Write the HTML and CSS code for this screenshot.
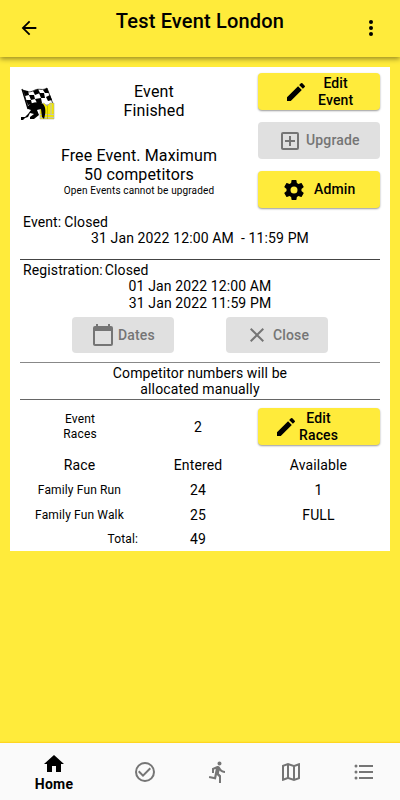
FILE: index.html
```
<!DOCTYPE html>
<html lang="en">
<head>
<title>Test Event London</title>
<meta charset="utf-8">
<meta name="viewport" content="width=device-width, initial-scale=1">
<link rel="stylesheet" href="styles.css">
</head>
<body>

<header class="appbar">
	<svg class="back" viewBox="0 0 24 24"><path d="M20 11H7.83l5.59-5.59L12 4l-8 8 8 8 1.41-1.41L7.83 13H20v-2z"/></svg>
	<h1>Test Event London</h1>
	<svg class="more" viewBox="0 0 24 24"><circle cx="12" cy="5.5" r="2.2"/><circle cx="12" cy="12" r="2.2"/><circle cx="12" cy="18.5" r="2.2"/></svg>
</header>

<main class="card">
	<section class="top">
		<div class="info">
			<div class="status">
				<svg class="logo" viewBox="0 0 34 34">
					<path fill="#fff" stroke="#111" stroke-width=".8" d="M2 3c5 3 8 2 12 0s8 1 12-2l6 16c-5 2-8 1-12 1s-7 3-13 2z"/>
					<path d="M2 3l5 1 1 4-4 1zM12 4l5-2 2 4-5 2zM22 3l4-2 2 5-4 0zM8 8l5 0 1 4-4 1zM18 6l5 0 1 5-4 0zM5 13l5 0 1 4-4 1zM14 12l6-1 1 5-5 0zM25 10l4-2 2 5-4 1z"/>
					<path fill="none" stroke="#000" stroke-width="1.2" d="M1 2l6 20"/>
					<path fill="#f3e800" stroke="#aaa" stroke-width=".6" d="M19 17l4-1 3 3 3-3 4 0v16H19z"/>
					<path fill="none" stroke="#c3c3b0" stroke-width="1.2" d="M19 27.500h14M19 30.500h14M30 17v10"/>
					<path fill="none" stroke="#b3aa00" stroke-width=".7" d="M26.500 19v13"/>
					<path d="M7 19c3-4 11-5 15-2 3 3 3 9 1 15l-2-2-1-8-4 1 2 5-5 4-4 0 0-2 4-3-4-1-2 4-3 1-2 2H0v-3l4 0 3-3 3-4-3-1z"/>
				</svg>
				<p>Event<br>Finished</p>
			</div>
			<div class="plan">
				<p>Free Event. Maximum<br>50 competitors</p>
				<p class="note">Open Events cannot be upgraded</p>
			</div>
		</div>
		<div class="actions">
			<button class="btn btn-edit">
				<svg viewBox="0 0 24 24"><path d="M3 17.25V21h3.75L17.81 9.94l-3.75-3.75L3 17.25zM20.71 7.04a1 1 0 0 0 0-1.41l-2.34-2.34a1 1 0 0 0-1.41 0l-1.83 1.83 3.75 3.75 1.83-1.83z"/></svg>
				<span>Edit<br>Event</span>
			</button>
			<button class="btn btn-upgrade" disabled>
				<svg viewBox="0 0 24 24"><path d="M19 3H5a2 2 0 0 0-2 2v14c0 1.1.9 2 2 2h14a2 2 0 0 0 2-2V5a2 2 0 0 0-2-2zm0 16H5V5h14v14zm-8-2h2v-4h4v-2h-4V7h-2v4H7v2h4z"/></svg>
				<span>Upgrade</span>
			</button>
			<button class="btn btn-admin">
				<svg viewBox="0 0 24 24"><path d="M19.43 12.98c.04-.32.07-.64.07-.98s-.03-.66-.07-.98l2.11-1.65c.19-.15.24-.42.12-.64l-2-3.46c-.12-.22-.39-.3-.61-.22l-2.49 1c-.52-.4-1.08-.73-1.69-.98l-.38-2.65A.49.49 0 0 0 14 2h-4c-.25 0-.46.18-.49.42l-.38 2.65c-.61.25-1.17.59-1.69.98l-2.49-1c-.23-.09-.49 0-.61.22l-2 3.46c-.13.22-.07.49.12.64l2.11 1.65c-.04.32-.07.65-.07.98s.03.66.07.98l-2.11 1.65c-.19.15-.24.42-.12.64l2 3.46c.12.22.39.3.61.22l2.49-1c.52.4 1.08.73 1.69.98l.38 2.65c.03.24.24.42.49.42h4c.25 0 .46-.18.49-.42l.38-2.65c.61-.25 1.17-.59 1.69-.98l2.49 1c.23.09.49 0 .61-.22l2-3.46c.12-.22.07-.49-.12-.64l-2.11-1.65zM12 15.5a3.5 3.5 0 1 1 0-7 3.5 3.5 0 0 1 0 7z"/></svg>
				<span>Admin</span>
			</button>
		</div>
	</section>

	<section class="event">
		<p class="label"><span>Event:</span><span>Closed</span></p>
		<p class="date">31 Jan 2022 12:00 AM&nbsp; - 11:59 PM</p>
	</section>

	<section class="registration">
		<p class="label"><span>Registration:</span><span>Closed</span></p>
		<p class="date">01 Jan 2022 12:00 AM<br>31 Jan 2022 11:59 PM</p>
		<div class="reg-buttons">
			<button class="btn btn-dates" disabled>
				<svg viewBox="0 0 24 24"><path d="M20 3h-1V1h-2v2H7V1H5v2H4a2 2 0 0 0-2 2v16c0 1.1.9 2 2 2h16a2 2 0 0 0 2-2V5a2 2 0 0 0-2-2zm0 18H4V8h16v13z"/></svg>
				<span>Dates</span>
			</button>
			<button class="btn btn-close" disabled>
				<svg viewBox="0 0 24 24"><path d="M19 6.41L17.59 5 12 10.59 6.41 5 5 6.41 10.59 12 5 17.59 6.41 19 12 13.41 17.59 19 19 17.59 13.41 12z"/></svg>
				<span>Close</span>
			</button>
		</div>
	</section>

	<section class="numbers">
		<p>Competitor numbers will be<br>allocated manually</p>
	</section>

	<section class="races">
		<p class="small">Event<br>Races</p>
		<p class="count">2</p>
		<button class="btn btn-races">
			<svg viewBox="0 0 24 24"><path d="M3 17.25V21h3.75L17.81 9.94l-3.75-3.75L3 17.25zM20.71 7.04a1 1 0 0 0 0-1.41l-2.34-2.34a1 1 0 0 0-1.41 0l-1.83 1.83 3.75 3.75 1.83-1.83z"/></svg>
			<span>Edit<br>Races</span>
		</button>
	</section>

	<table class="results">
		<tr><th class="race">Race</th><th class="entered">Entered</th><th>Available</th></tr>
		<tr><td class="small">Family Fun Run</td><td>24</td><td>1</td></tr>
		<tr><td class="small">Family Fun Walk</td><td>25</td><td>FULL</td></tr>
		<tr><td class="small total">Total:</td><td>49</td><td></td></tr>
	</table>
</main>

<nav class="tabs">
	<a class="tab active">
		<svg viewBox="0 0 24 24"><path d="M10 20v-6h4v6h5v-8h3L12 3 2 12h3v8z"/></svg>
		<span>Home</span>
	</a>
	<a class="tab">
		<svg viewBox="0 0 24 24"><path d="M16.59 7.58L10 14.17l-3.59-3.58L5 12l5 5 8-8zM12 2a10 10 0 1 0 0 20 10 10 0 0 0 0-20zm0 18a8 8 0 1 1 0-16 8 8 0 0 1 0 16z"/></svg>
	</a>
	<a class="tab">
		<svg viewBox="0 0 24 24"><path d="M13.49 5.48c1.1 0 2-.9 2-2s-.9-2-2-2-2 .9-2 2 .9 2 2 2zm-3.6 13.9l1-4.4 2.1 2v6h2v-7.5l-2.1-2 .6-3c1.3 1.5 3.3 2.5 5.5 2.5v-2c-1.9 0-3.5-1-4.3-2.4l-1-1.6c-.4-.6-1-1-1.7-1-.3 0-.5.1-.8.1l-5.2 2.2v4.7h2v-3.4l1.8-.7-1.6 8.1-4.9-1-.4 2 7 1.4z"/></svg>
	</a>
	<a class="tab">
		<svg viewBox="0 0 24 24"><path d="M20.5 3l-.16.03L15 5.1 9 3 3.36 4.9c-.21.07-.36.25-.36.48V20.5c0 .28.22.5.5.5l.16-.03L9 18.9l6 2.1 5.64-1.9c.21-.07.36-.25.36-.48V3.5c0-.28-.22-.5-.5-.5zM10 5.47l4 1.4v11.66l-4-1.4V5.47zm-5 .99l3-1.01v11.7l-3 1.16V6.46zm14 11.08l-3 1.01V6.86l3-1.16v11.84z"/></svg>
	</a>
	<a class="tab">
		<svg viewBox="0 0 24 24"><path d="M4 10.5a1.5 1.5 0 1 0 0 3 1.5 1.5 0 0 0 0-3zm0-6a1.5 1.5 0 1 0 0 3 1.5 1.5 0 0 0 0-3zm0 12a1.5 1.5 0 1 0 0 3 1.5 1.5 0 0 0 0-3zM7 19h14v-2H7v2zm0-6h14v-2H7v2zm0-8v2h14V5H7z"/></svg>
	</a>
</nav>

</body>
</html>
```
FILE: styles.css
```
* {box-sizing: border-box;}
body {margin: 0; height: 800px; display: flex; flex-direction: column; background-color: #ffeb3b; color: #000; font-family: Roboto, sans-serif; font-size: 14px; line-height: 16.4px; letter-spacing: 0.12px;}
p, h1 {margin: 0;}
svg {display: block; flex: none; fill: currentColor;}

.appbar {height: 57px; flex: none; display: flex; padding: 0 18px; background-color: #ffeb3b; box-shadow: 0 2px 5px rgba(0,0,0,0.4);}
.appbar h1 {flex: 1; text-align: center; font-size: 20px; font-weight: 500; line-height: 24px; letter-spacing: 0.18px; padding-top: 9px;}
.appbar svg {width: 22px; height: 22px; margin-top: 17px;}

.card {width: 380px; height: 484px; margin: 10px auto 0; padding: 6px 10px 0; background-color: #fff; text-align: center;}

.top {display: flex; justify-content: space-between; height: 141px;}
.info {width: 238px; font-size: 16px; line-height: 18.75px; letter-spacing: 0.14px;}
.status {display: flex; height: 74px; padding: 10px 0 0 1px;}
.status p {width: 92px; margin-left: 53px;}
.logo {width: 34px; height: 34px; margin-top: 4px;}
.note {font-size: 10px; line-height: 12px; letter-spacing: 0.13px;}
.actions {display: flex; flex-direction: column; gap: 12px;}

.btn {display: flex; align-items: center; width: 122px; height: 37px; padding: 0; border: 0; border-radius: 4px; background-color: #ffeb3b; color: #000; font: 500 14px/16.4px Roboto, sans-serif; letter-spacing: 0.15px; box-shadow: 0 1px 2px rgba(0,0,0,0.4);}
.btn:disabled {background-color: #e0e0e0; color: #757575; box-shadow: none;}
.btn svg {width: 24px; height: 24px;}
.btn-edit {padding-left: 26px; gap: 10px;}
.btn-upgrade {padding-left: 20px; gap: 4px;}
.btn-admin {padding-left: 24px; gap: 8px;}
.btn-races {padding-left: 16px; gap: 1px;}

.event {height: 46px; border-bottom: 1px solid #444;}
.label {display: flex; gap: 3px; padding-left: 3px;}
.registration {height: 103px; padding-top: 2px; border-bottom: 1px solid #888;}
.registration .label {gap: 2px;}
.reg-buttons {display: flex; justify-content: space-between; padding: 6px 52px 0;}
.reg-buttons .btn {width: 102px; height: 36px;}
.btn-dates {padding-left: 19px; gap: 3px;}
.btn-close {padding-left: 19px; gap: 4px;}
.numbers {height: 37px; padding-top: 2px; border-bottom: 1px solid #666;}

.races {display: grid; grid-template-columns: 120px 116px 122px; align-items: center; height: 53px; justify-content: space-between;}
.count {padding: 1px 2px 0 0;}
.small {font-size: 12px; line-height: 14.5px; letter-spacing: 0.14px;}

.results {width: 360px; table-layout: fixed; border-collapse: collapse;}
.results th, .results td {height: 24.5px; padding: 0; font-weight: 400;}
.results tr:first-child th {height: 25px;}
.results .race {width: 119px;}
.results .entered {width: 118px;}
.results .total {text-align: right; padding-right: 1px;}

.tabs {display: flex; height: 57px; margin-top: auto; background-color: #fafafa; box-shadow: 0 -1px 1px rgba(255,193,7,0.5); color: #757575;}
.tab {flex: 0 0 73px; display: flex; flex-direction: column; align-items: center; justify-content: center;}
.tab.active {flex-basis: 108px; padding-top: 1px; color: #000; font-weight: 700; letter-spacing: 0.25px;}
.tab svg {width: 24px; height: 24px;}
```
